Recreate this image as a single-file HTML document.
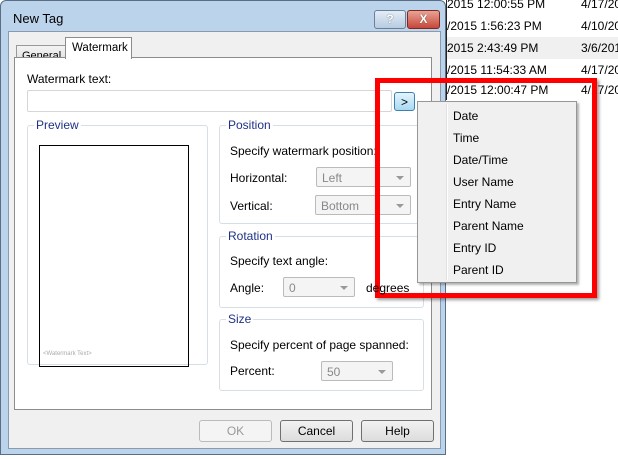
<!DOCTYPE html>
<html><head><style>
body{margin:0;width:618px;height:459px;position:relative;background:#fff;font-family:"Liberation Sans",sans-serif;font-size:12px;color:#000;overflow:hidden}
.a{position:absolute;white-space:nowrap}
.row{position:absolute;left:447px;width:171px;height:22px;font-size:12px;line-height:22px;white-space:nowrap}
.row b{position:absolute;left:134px;font-weight:normal}
.grp{position:absolute;border:1px solid #d5dfe5;border-radius:3px}
.grp>span{position:absolute;top:-8px;left:6px;background:#fff;padding:0 2px;color:#1e3287}
.combo{position:absolute;border:1px solid #bbb;background:#f4f4f4;color:#888;height:20px;line-height:20px;padding-left:5px;box-sizing:border-box;border-radius:2px}
.combo:after{content:"";position:absolute;right:6px;top:8px;border:4px solid transparent;border-top:4px solid #999}
.btn{position:absolute;top:420px;height:20px;border:1px solid #707070;border-radius:3px;background:linear-gradient(#f2f2f2,#dcdcdc);text-align:center;line-height:20px;font-size:12px}
.mi{position:absolute;left:35px;font-size:12px}
</style></head><body>
<div class="row" style="top:-7px">2015 12:00:55 PM<b>4/17/20</b></div>
<div class="row" style="top:15px">/2015 1:56:23 PM<b>4/10/20</b></div>
<div class="row" style="top:37px;background:#f0f0f0">2015 2:43:49 PM<b>3/6/201</b></div>
<div class="row" style="top:59px">/2015 11:54:33 AM<b>4/17/20</b></div>
<div class="row" style="top:79px">/2015 12:00:47 PM<b>4/17/20</b></div>
<div class="a" style="left:446px;top:0;width:1px;height:100px;background:#222"></div>
<div class="a" style="left:0;top:0;width:446px;height:455px;background:#bcd3ec;border:1px solid #5a6e85;border-radius:6px 6px 0 0;box-sizing:border-box"></div>
<div class="a" style="left:13px;top:11px;font-size:13px">New Tag</div>
<div class="a" style="left:374px;top:10px;width:30px;height:17px;border:1px solid #6d7f96;border-radius:3px;background:linear-gradient(#e3edf7,#b7cbe0);text-align:center;font-weight:bold;color:#fff;line-height:17px;text-shadow:0 0 1px #333">?</div>
<div class="a" style="left:407px;top:10px;width:31px;height:17px;border:1px solid #7a2a20;border-radius:3px;background:linear-gradient(#e8a496,#c7473a);text-align:center;font-weight:bold;color:#fff;line-height:17px;text-shadow:0 0 1px #333">X</div>
<div class="a" style="left:8px;top:31px;width:431px;height:416px;background:#f0f0f0;border:1px solid #8a9bb0"></div>
<div class="a" style="left:16px;top:45px;width:50px;height:18px;border:1px solid #999;background:linear-gradient(#f4f4f4,#dfdfdf);font-size:11px;line-height:20px;padding-left:5px;box-sizing:border-box">General</div>
<div class="a" style="left:14px;top:57px;width:418px;height:353px;background:#fff;border:1px solid #8c8c8c;box-sizing:border-box"></div>
<div class="a" style="left:65px;top:37px;width:67px;height:22px;background:#fff;border:1px solid #8c8c8c;border-bottom:none;line-height:20px;padding-left:6px;box-sizing:border-box;font-size:11.5px">Watermark</div>
<div class="a" style="left:27px;top:72px">Watermark text:</div>
<div class="a" style="left:27px;top:90px;width:365px;height:22px;border:1px solid #d6d6d6;border-radius:2px;box-sizing:border-box"></div>
<div class="a" style="left:394px;top:92px;width:21px;height:19px;border:1px solid #3c7fb1;border-radius:3px;background:linear-gradient(#e5f4fc,#a9d9f2);text-align:center;line-height:18px;box-sizing:border-box">&gt;</div>
<div class="grp" style="left:27px;top:125px;width:179px;height:238px"><span>Preview</span></div>
<div class="a" style="left:39px;top:145px;width:150px;height:222px;border:1px solid #000;box-sizing:border-box"></div>
<div class="a" style="left:43px;top:351px;font-size:6px;color:#aaa">&lt;Watermark Text&gt;</div>
<div class="grp" style="left:219px;top:125px;width:203px;height:97px"><span>Position</span></div>
<div class="a" style="left:230px;top:144px">Specify watermark position:</div>
<div class="a" style="left:230px;top:171px">Horizontal:</div>
<div class="combo" style="left:316px;top:167px;width:95px">Left</div>
<div class="a" style="left:230px;top:199px">Vertical:</div>
<div class="combo" style="left:315px;top:195px;width:96px">Bottom</div>
<div class="grp" style="left:219px;top:236px;width:203px;height:70px"><span>Rotation</span></div>
<div class="a" style="left:230px;top:254px">Specify text angle:</div>
<div class="a" style="left:230px;top:281px">Angle:</div>
<div class="combo" style="left:283px;top:277px;width:72px">0</div>
<div class="grp" style="left:219px;top:319px;width:203px;height:70px"><span>Size</span></div>
<div class="a" style="left:230px;top:338px">Specify percent of page spanned:</div>
<div class="a" style="left:230px;top:364px">Percent:</div>
<div class="combo" style="left:321px;top:361px;width:72px">50</div>
<div class="btn" style="left:199px;width:71px;border-color:#bbb;background:#f4f4f4;color:#999">OK</div>
<div class="btn" style="left:280px;width:71px">Cancel</div>
<div class="btn" style="left:361px;width:71px">Help</div>
<div class="a" style="left:375px;top:78px;width:222px;height:220px;border:5px solid #f00;box-sizing:border-box;box-shadow:2px 2px 3px rgba(0,0,0,.4)"></div>
<div class="a" style="left:366px;top:281px">degrees</div>
<div class="a" style="left:417px;top:101px;width:160px;height:182px;background:#f0f0f0;border:1px solid #979797;box-sizing:border-box;box-shadow:2px 2px 2px rgba(0,0,0,.3)">
<div class="a" style="left:28px;top:2px;width:1px;height:176px;background:#e0e0e0;border-right:1px solid #fff"></div>
<div class="mi" style="top:7px">Date</div><div class="mi" style="top:29px">Time</div><div class="mi" style="top:51px">Date/Time</div><div class="mi" style="top:73px">User Name</div><div class="mi" style="top:95px">Entry Name</div><div class="mi" style="top:117px">Parent Name</div><div class="mi" style="top:139px">Entry ID</div><div class="mi" style="top:161px">Parent ID</div>
</div>
</body></html>
